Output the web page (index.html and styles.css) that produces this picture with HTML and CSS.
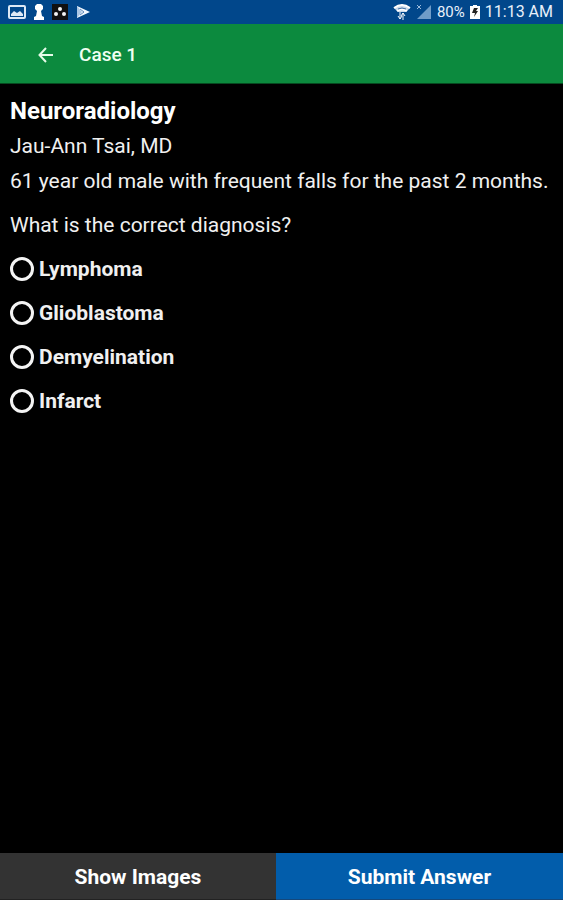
FILE: index.html
```html
<!DOCTYPE html>
<html lang="en">
<head>
<meta charset="utf-8">
<meta name="viewport" content="width=device-width, initial-scale=1">
<title>Case 1</title>
<link rel="stylesheet" href="styles.css">
</head>
<body>
<div class="status">
  <div class="status-group notices">
    <svg width="18" height="14" viewBox="0 0 18 14" aria-hidden="true"><rect x="1" y="1" width="16" height="12" rx="1" fill="none" stroke="#dce8f5" stroke-width="2"/><path d="M3 11V9l3-3 3 2 3-2 3 3v2z" fill="#dce8f5"/></svg>
    <svg width="10" height="16" viewBox="0 0 10 16" aria-hidden="true"><path d="M3 0h4l2 2v3L7 7l1 5 2 1v3H0v-3l2-1 1-5-2-2V2z" fill="#fff"/></svg>
    <svg width="16" height="16" viewBox="0 0 16 16" aria-hidden="true"><rect width="16" height="16" fill="#101010"/><g fill="#f4f4f4"><circle cx="8" cy="5" r="2"/><circle cx="4" cy="10" r="2"/><circle cx="12" cy="10" r="2"/></g></svg>
    <svg width="14" height="14" viewBox="0 0 14 14" aria-hidden="true"><path d="M1 1v12L14 7z" fill="#f2f8ff"/><path d="M1 1v12l5-6z" fill="#a9c6e4"/><path d="m4 4 4 3-4 3" fill="none" stroke="#5a86b8"/></svg>
  </div>
  <div class="status-group">
    <svg width="18" height="18" viewBox="0 0 18 18" aria-hidden="true"><path d="M1 5q8-7 16 0l-4 4H5z" fill="#c9d9ea"/><g fill="none" stroke="#fff" stroke-width="2"><path d="M1 5q8-6 16 0M4 8q5-3 10 0"/></g><path d="M5 6q4-2 8 0" fill="none" stroke="#3b6da3"/><path d="M7 9v7M5 13l2 3 2-3M10 17v-7M8 13l2-3 2 3" fill="none" stroke="#f4f8fc" stroke-width="1"/></svg>
    <svg width="16" height="16" viewBox="0 0 16 16" aria-hidden="true"><path d="M15 1v14H1z" fill="#6f9cc8"/><path d="m1 1 4 4M5 1 1 5" stroke="#9dbbdc"/></svg>
    <span class="percent">80%</span>
    <svg width="10" height="15" viewBox="0 0 10 15" aria-hidden="true"><path d="M3 0h4v1h3v13H0V1h3z" fill="#fff"/><path d="M4 3h4L6 6h2l-4 6 1-4H2z" fill="#222"/></svg>
    <time class="clock">11:13 AM</time>
  </div>
</div>
<header class="bar">
  <button class="back" type="button" aria-label="Back"><svg width="16" height="16" viewBox="0 0 16 16" aria-hidden="true"><path d="M15 8H2M8 1 1.500 8 8 15" fill="none" stroke="#e6fbe9" stroke-width="2"/></svg></button>
  <h1 class="title">Case 1</h1>
</header>
<main class="content">
  <h2 class="subject">Neuroradiology</h2>
  <p class="line">Jau-Ann Tsai, MD</p>
  <p class="line">61 year old male with frequent falls for the past 2 months.</p>
  <fieldset class="quiz">
    <legend class="question">What is the correct diagnosis?</legend>
    <label class="option"><input type="radio" name="diagnosis">Lymphoma</label>
    <label class="option"><input type="radio" name="diagnosis">Glioblastoma</label>
    <label class="option"><input type="radio" name="diagnosis">Demyelination</label>
    <label class="option"><input type="radio" name="diagnosis">Infarct</label>
  </fieldset>
</main>
<footer class="actions">
  <button class="action" type="button">Show Images</button>
  <button class="action primary" type="submit">Submit Answer</button>
</footer>
</body>
</html>
```
FILE: styles.css
```css
* { box-sizing: border-box; }
body {
  margin: 0;
  min-height: 100vh;
  display: flex;
  flex-direction: column;
  background: #000;
  color: #f0f0f0;
  font-family: Roboto, "Liberation Sans", sans-serif;
}
svg { display: block; flex: none; }
h1, h2, p { margin: 0; }
button { border: 0; padding: 0; background: none; font: inherit; color: inherit; }
.status {
  display: flex;
  justify-content: space-between;
  align-items: center;
  height: 24px;
  padding: 0 10px 0 8px;
  background: #01478b;
  color: #e8f0fa;
}
.status-group { display: flex; align-items: center; gap: 5px; }
.notices { gap: 8px; }
.percent { font-size: 15px; }
.clock { font-size: 16px; line-height: 24px; }
.bar {
  display: flex;
  align-items: center;
  gap: 25px;
  height: 60px;
  padding: 2px 38px 0;
  border-bottom: 1px solid #064a20;
  background: #0c8a3e;
}
.title { font-size: 19px; font-weight: 500; color: #f0fff2; }
.content { flex: 1; padding: 10px; font-size: 21px; }
.subject { font-size: 24px; line-height: 35px; font-weight: 700; color: #fff; }
.line { line-height: 35px; }
.quiz { margin: 0; padding: 0; border: 0; min-width: 0; }
.question { padding: 0; line-height: 52px; }
.option {
  display: flex;
  align-items: center;
  gap: 5px;
  height: 44px;
  font-weight: 700;
}
.quiz .option:first-of-type { margin-top: -4px; }
.option input {
  appearance: none;
  width: 24px;
  height: 24px;
  margin: 0;
  border: 3px solid #f4f4f4;
  border-radius: 50%;
}
.option input:checked { background: radial-gradient(#f4f4f4 40%, #000 45%); }
.actions { display: grid; grid-template-columns: 49fr 51fr; height: 47px; }
.action {
  padding-top: 2px;
  border-bottom: 1px solid #222;
  background: #333;
  color: #fff;
  font-size: 21px;
  font-weight: 700;
}
.action.primary { border-bottom-color: #14487c; background: #025dab; }
```
